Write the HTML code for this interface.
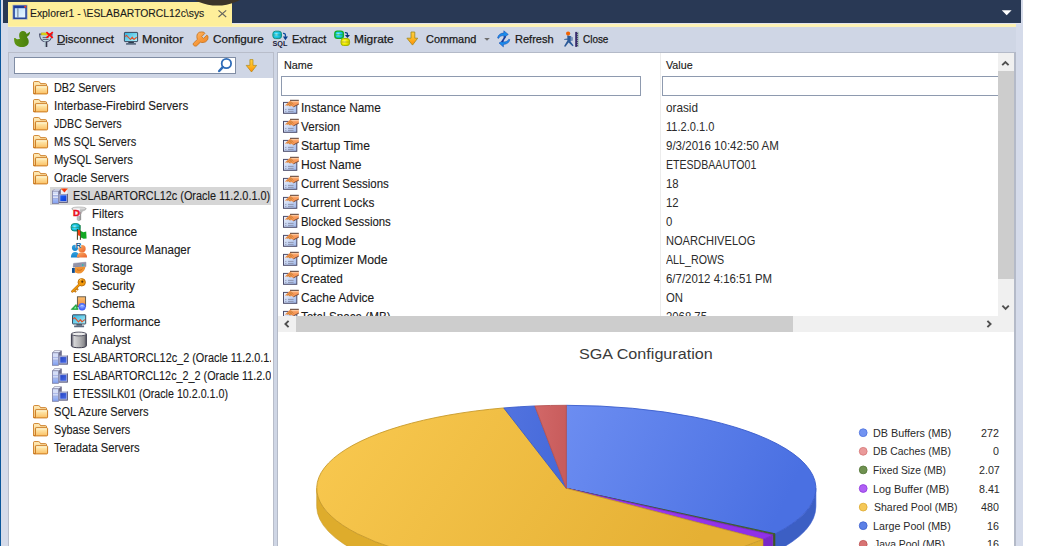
<!DOCTYPE html>
<html><head><meta charset="utf-8"><title>Explorer1</title>
<style>
html,body{margin:0;padding:0;background:#fff;}
body{width:1037px;height:546px;position:relative;overflow:hidden;font-family:"Liberation Sans",sans-serif;}
.a{position:absolute;}
.t{position:absolute;white-space:pre;-webkit-text-stroke:0.12px;transform-origin:0 0;display:inline-block;line-height:16px;height:16px;font-family:"Liberation Sans",sans-serif;}
svg{position:absolute;overflow:visible;}
</style></head><body>
<!-- window chrome -->
<div class="a" style="left:0;top:0;width:1023px;height:546px;background:#d5dbea"></div>
<div class="a" style="left:0;top:0;width:1.3px;height:546px;background:#0a569b"></div>
<div class="a" style="left:3px;top:0;width:1018px;height:23px;background:#293955"></div>
<div class="a" style="left:8px;top:27px;width:1008px;height:519px;background:#cfd6e5"></div>
<div class="a" style="left:8px;top:23px;width:1013px;height:1px;background:#e2e5f1"></div>
<div class="a" style="left:8px;top:24px;width:1008px;height:3px;background:#fdf2b4"></div>
<div class="a" style="left:8px;top:2px;width:224px;height:24.2px;background:#feef9a"></div>
<svg style="left:190px;top:0" width="60" height="8" viewBox="190 0 60 8"><circle cx="217.3" cy="-42.4" r="48" fill="#3b3429"/></svg>
<!-- left panel -->
<div class="a" style="left:8px;top:52px;width:266px;height:494px;background:#b8bdca"></div>
<div class="a" style="left:9px;top:53px;width:263.5px;height:493px;background:#cfd6e5"></div>
<div class="a" style="left:9px;top:77.5px;width:263.5px;height:469px;background:#fff"></div>
<div class="a" style="left:14px;top:57px;width:220px;height:15px;background:#fff;border:1px solid #808da4"></div>
<div class="a" style="left:50px;top:187px;width:221px;height:18px;background:#d6d6d6"></div>
<!-- right panel -->
<div class="a" style="left:277px;top:52px;width:739px;height:494px;background:#b4bac8"></div>
<div class="a" style="left:278.4px;top:53.4px;width:735.4px;height:493px;background:#fff"></div>
<div class="a" style="left:659.5px;top:53px;width:1px;height:264px;background:#ececec"></div>
<div class="a" style="left:281px;top:76px;width:358px;height:18px;background:#fff;border:1px solid #8e9aaf"></div>
<div class="a" style="left:662px;top:76px;width:340px;height:18px;background:#fff;border:1px solid #8e9aaf"></div>
<!-- scrollbars -->
<div class="a" style="left:998px;top:53px;width:15.8px;height:279px;background:#f0f0f0"></div>
<div class="a" style="left:278.3px;top:316.2px;width:735.5px;height:15.5px;background:#f0f0f0"></div>
<div class="a" style="left:998px;top:70.8px;width:15.8px;height:208.4px;background:#cdcdcd"></div>
<div class="a" style="left:296px;top:316.2px;width:496.5px;height:15.5px;background:#cdcdcd"></div>
<svg style="left:0;top:0" width="1037" height="546" viewBox="0 0 1037 546"><defs><linearGradient id="fo1" x1="0" y1="0" x2="0" y2="1"><stop offset="0" stop-color="#fff3c0"/><stop offset="1" stop-color="#fbbf62"/></linearGradient><linearGradient id="fo2" x1="0" y1="0" x2="0" y2="1"><stop offset="0" stop-color="#fff0c0"/><stop offset="1" stop-color="#f6b256"/></linearGradient><linearGradient id="tw" x1="0" y1="0" x2="0" y2="1"><stop offset="0" stop-color="#dfe7fb"/><stop offset="0.5" stop-color="#b4c4f4"/><stop offset="1" stop-color="#7f9ff0"/></linearGradient><linearGradient id="sc" x1="0" y1="0" x2="1" y2="1"><stop offset="0" stop-color="#2443c2"/><stop offset="1" stop-color="#4a6ce6"/></linearGradient><linearGradient id="sc2" x1="0" y1="0" x2="1" y2="1"><stop offset="0" stop-color="#1f63f4"/><stop offset="1" stop-color="#0a3ad8"/></linearGradient><linearGradient id="rt" x1="0" y1="0" x2="1" y2="0"><stop offset="0" stop-color="#ff7a10"/><stop offset="0.5" stop-color="#f42a0c"/><stop offset="1" stop-color="#ff6a10"/></linearGradient><linearGradient id="mo" x1="0" y1="0" x2="1" y2="1"><stop offset="0" stop-color="#2fb0de"/><stop offset="1" stop-color="#b4f4fa"/></linearGradient><linearGradient id="dk" x1="0" y1="0" x2="1" y2="0"><stop offset="0" stop-color="#5f9612"/><stop offset="1" stop-color="#477d0c"/></linearGradient><linearGradient id="wr" x1="0" y1="0" x2="1" y2="1"><stop offset="0" stop-color="#ffc27a"/><stop offset="0.5" stop-color="#f89a3c"/><stop offset="1" stop-color="#ee8422"/></linearGradient><linearGradient id="ar" x1="0" y1="0" x2="0" y2="1"><stop offset="0" stop-color="#ffd040"/><stop offset="0.5" stop-color="#ffb820"/><stop offset="1" stop-color="#ff8a08"/></linearGradient><radialGradient id="cy" cx="0.4" cy="0.45" r="0.6"><stop offset="0" stop-color="#d8ffff"/><stop offset="0.45" stop-color="#22d0f0"/><stop offset="1" stop-color="#12a4c4"/></radialGradient><radialGradient id="ye" cx="0.4" cy="0.45" r="0.6"><stop offset="0" stop-color="#ffffa0"/><stop offset="0.5" stop-color="#f4f000"/><stop offset="1" stop-color="#c8cc00"/></radialGradient><linearGradient id="cl" x1="0" y1="0" x2="1" y2="0"><stop offset="0" stop-color="#4a4a5c"/><stop offset="0.18" stop-color="#d6d6d8"/><stop offset="0.55" stop-color="#b4b4b6"/><stop offset="0.85" stop-color="#8c8c90"/><stop offset="1" stop-color="#4c4c58"/></linearGradient><linearGradient id="bp" x1="0" y1="0" x2="0" y2="1"><stop offset="0" stop-color="#35a2de"/><stop offset="1" stop-color="#1583cc"/></linearGradient><linearGradient id="op" x1="0" y1="0" x2="1" y2="1"><stop offset="0" stop-color="#fbb068"/><stop offset="1" stop-color="#e9602a"/></linearGradient><linearGradient id="sq" x1="0" y1="0" x2="0" y2="1"><stop offset="0" stop-color="#fcc070"/><stop offset="1" stop-color="#ee8a3c"/></linearGradient><radialGradient id="bc" cx="0.5" cy="0.45" r="0.55"><stop offset="0" stop-color="#9ab2ff"/><stop offset="0.55" stop-color="#5878fa"/><stop offset="1" stop-color="#3452f4"/></radialGradient><linearGradient id="pr" x1="0" y1="0" x2="1" y2="1"><stop offset="0" stop-color="#f2f5fc"/><stop offset="1" stop-color="#9db6ea"/></linearGradient><linearGradient id="ti" x1="0" y1="0" x2="1" y2="1"><stop offset="0" stop-color="#bfe0fb"/><stop offset="1" stop-color="#eaf6ff"/></linearGradient></defs><rect x="12.5" y="4.8" width="15" height="14.8" fill="#9aa4be"/><rect x="13.3" y="5.5" width="13.4" height="13.4" fill="#1c3c98"/><rect x="14.8" y="8.2" width="10.5" height="9.3" fill="url(#ti)"/><rect x="17.4" y="8.2" width="1" height="9.3" fill="#66768e"/><rect x="24.3" y="5.9" width="1.9" height="1.8" fill="#ff3a1a"/><path d="M218.5,10.4 L226.2,17 M226.2,10.4 L218.5,17" stroke="#66665e" stroke-width="1.15" fill="none"/><g transform="translate(14,31)"><path d="M8.9,0 C11,0 12.4,1.4 12.6,3 L16,0.8 C16.2,2.6 15.2,4.4 13.6,5.2 L12.9,6.3 C14.2,7.6 14.9,9.4 14.7,11.2 C14.4,14 11.8,16 8,16 C4,16 1.2,14.2 0.5,11.2 C0.1,9.6 0,8 0.2,7.1 C1,6.8 2,7.2 2.4,8 C3.6,8.4 5,8.3 6,7.8 C5.2,6.8 5.1,5 5.2,3.6 C5.4,1.4 6.9,0 8.9,0 Z" fill="url(#dk)"/></g><path d="M39.6,34.2 H52 C52,38.6 49.5,41.8 45.8,42 C42.1,41.8 39.6,38.6 39.6,34.2 Z" fill="#c2d9e1" stroke="#4f5472" stroke-width="1.2"/><rect x="41.2" y="32.9" width="6.2" height="2.1" fill="#e4da10" stroke="#a8a428" stroke-width="0.5"/><path d="M42.6,37.4 H48.6 M42.6,39.4 H48.6" stroke="#4a5068" stroke-width="0.9"/><rect x="44.2" y="41.6" width="1.6" height="5.4" fill="#bcd2da"/><rect x="45.7" y="41.6" width="1.6" height="5.4" fill="#34364c"/><path d="M46.4,32.2 L52.8,37.8 M52.8,32.2 L46.4,37.8" stroke="#ff0a0a" stroke-width="1.7"/><rect x="57" y="43.8" width="8" height="1" fill="#1a1a1a"/><g transform="translate(123.9,31.9)"><rect x="0.5" y="0.5" width="13.2" height="9.2" rx="0.6" fill="url(#mo)" stroke="#3a4a60" stroke-width="1"/><path d="M1.2,4.7 L2.6,3.4 L6.5,7.6 L8.4,5.3 L10,7.6 L12.8,5.3" fill="none" stroke="#e2502a" stroke-width="1.1" stroke-linejoin="round"/><rect x="4.4" y="10" width="5.6" height="1.3" fill="#2b3a4c"/><rect x="2.1" y="11.2" width="10" height="1.7" rx="0.3" fill="#5b6b80"/></g><path d="M193.4,43.2 L197.4,39.4 C196.6,37.4 196.8,35.2 197.5,33.8 L199.2,32.3 C200.6,31.8 202.6,31.8 203.9,32.2 L204.9,33.3 L201.7,36.6 L203.5,38.4 L206.8,35.1 L207.8,35.9 C208.2,37.4 208,39.2 207.3,40.2 L205.6,41.8 C204.2,42.5 202.2,42.8 200.4,42.2 L196.5,45.9 C195.6,46.4 194.3,46 193.6,45.2 C193.1,44.5 193,43.8 193.4,43.2 Z" fill="url(#wr)" stroke="#c47018" stroke-width="0.8" stroke-linejoin="round"/><rect x="272.9" y="31.2" width="8.6" height="7.4" rx="2.6" fill="url(#cy)" stroke="#16947e" stroke-width="1"/><path d="M273.4,34.9 H281" stroke="#16947e" stroke-width="0.7"/><path d="M283,33.3 C285,33.1 285.6,34 285.5,36.8" fill="none" stroke="#0d4ea0" stroke-width="1.3"/><path d="M282.9,36.6 H288 L285.4,40.2 Z" fill="#0a3f8c"/><text x="272.5" y="45.9" font-family="Liberation Sans, sans-serif" font-size="6.3" font-weight="bold" fill="#1c2038" textLength="15" lengthAdjust="spacingAndGlyphs">SQL</text><rect x="334.8" y="31.2" width="8.6" height="7.2" rx="2.6" fill="url(#cy)" stroke="#12b024" stroke-width="1.3"/><path d="M335.2,34.8 H343" stroke="#12b024" stroke-width="0.8"/><rect x="341" y="38.5" width="8.6" height="7" rx="2.6" fill="url(#ye)" stroke="#a4b400" stroke-width="1"/><path d="M341.4,42 H349.2" stroke="#b0a000" stroke-width="0.8"/><path d="M344.9,32.6 C347,32.4 347.6,33 347.5,35.4" fill="none" stroke="#0d3f88" stroke-width="1.3"/><path d="M344.9,35 H350 L347.4,37.9 Z" fill="#0a3270"/><path d="M411,32 H414.8 V38.2 H417.7 L412.5,45.1 L406.9,38.2 H411 Z" fill="url(#ar)" stroke="#a08818" stroke-width="0.8" stroke-linejoin="round"/><path d="M484.2,38 H489.8 L487,40.8 Z" fill="#6e6e6e"/><path d="M497.6,38 C498,35 500.6,33 503.8,33 L503.8,30.8 L508.3,34.4 L503.8,37.6 L503.8,35.6 C501.2,35.6 499.4,36.6 498.6,38.4 Z" fill="#1b8cec" stroke="#1545a8" stroke-width="0.5"/><path d="M509.8,39.6 C509.4,42.6 506.8,44.4 503.4,44.4 L503.4,46.9 L499,43 L503.4,40.6 L503.4,42 C506,42 507.9,41 508.8,39.2 Z" fill="#1b8cec" stroke="#1545a8" stroke-width="0.5"/><path d="M505.6,36.2 L501.8,42" stroke="#1a3a98" stroke-width="1.6"/><circle cx="568.1" cy="33.6" r="2.1" fill="#f26200"/><path d="M567.2,35.6 L570.4,36 L572.4,37.4 L572.4,40.4 L570.8,40.4 L570.6,41.6 L573.6,45.4 L572.6,46.2 L568.6,42.6 L565.4,46.8 L564,46.2 L567.4,40.6 L567.4,39.8 L564.2,39.8 L564.2,38.9 L567.4,38.6 Z" fill="#2c5a98"/><rect x="570.6" y="37" width="2" height="3.6" fill="#7a94bc"/><rect x="575.2" y="31.9" width="2.2" height="15" fill="#3a2c6c"/><rect x="577.3" y="31.9" width="1.4" height="15" fill="#9ab8a8"/><path d="M576.6,33.5 H578 M576.6,35.5 H578 M576.6,37.5 H578 M576.6,39.5 H578 M576.6,41.5 H578 M576.6,43.5 H578 M576.6,45.5 H578" stroke="#3a2c6c" stroke-width="0.8"/><circle cx="226.4" cy="63.5" r="4.7" fill="#fff" stroke="#2f6cb8" stroke-width="1.8"/><path d="M222.8,67.2 L219.2,71" stroke="#2f6cb8" stroke-width="2.5" stroke-linecap="round"/><path d="M249.9,59.6 H253 V65.4 H256.6 L251.5,72 L246.2,65.4 H249.9 Z" fill="url(#ar)" stroke="#b08a18" stroke-width="0.7" stroke-linejoin="round"/><g transform="translate(33,81.1)"><path d="M0.5,12.4 V1.5 Q0.5,0.5 1.5,0.5 H5.6 Q6.3,0.5 6.7,1.1 L7.6,2.6 H12.6 Q13.5,2.6 13.5,3.5 V5 H2.4 V12.4 Z" fill="url(#fo2)" stroke="#cb7a22" stroke-width="1" stroke-linejoin="round"/><path d="M1.3,11.8 V1.8 Q1.3,1.3 1.9,1.3 H5.4" fill="none" stroke="#ffe9b4" stroke-width="0.7"/><rect x="2.4" y="4.7" width="12.2" height="8.1" rx="0.8" fill="url(#fo1)" stroke="#cb7a22" stroke-width="1"/><path d="M3.4,5.7 H13.7" stroke="#fff9e0" stroke-width="0.9" fill="none"/><path d="M0.5,12.4 Q0.5,12.8 1,12.8 H3" stroke="#cb7a22" stroke-width="1" fill="none"/></g><g transform="translate(33,99.1)"><path d="M0.5,12.4 V1.5 Q0.5,0.5 1.5,0.5 H5.6 Q6.3,0.5 6.7,1.1 L7.6,2.6 H12.6 Q13.5,2.6 13.5,3.5 V5 H2.4 V12.4 Z" fill="url(#fo2)" stroke="#cb7a22" stroke-width="1" stroke-linejoin="round"/><path d="M1.3,11.8 V1.8 Q1.3,1.3 1.9,1.3 H5.4" fill="none" stroke="#ffe9b4" stroke-width="0.7"/><rect x="2.4" y="4.7" width="12.2" height="8.1" rx="0.8" fill="url(#fo1)" stroke="#cb7a22" stroke-width="1"/><path d="M3.4,5.7 H13.7" stroke="#fff9e0" stroke-width="0.9" fill="none"/><path d="M0.5,12.4 Q0.5,12.8 1,12.8 H3" stroke="#cb7a22" stroke-width="1" fill="none"/></g><g transform="translate(33,117.1)"><path d="M0.5,12.4 V1.5 Q0.5,0.5 1.5,0.5 H5.6 Q6.3,0.5 6.7,1.1 L7.6,2.6 H12.6 Q13.5,2.6 13.5,3.5 V5 H2.4 V12.4 Z" fill="url(#fo2)" stroke="#cb7a22" stroke-width="1" stroke-linejoin="round"/><path d="M1.3,11.8 V1.8 Q1.3,1.3 1.9,1.3 H5.4" fill="none" stroke="#ffe9b4" stroke-width="0.7"/><rect x="2.4" y="4.7" width="12.2" height="8.1" rx="0.8" fill="url(#fo1)" stroke="#cb7a22" stroke-width="1"/><path d="M3.4,5.7 H13.7" stroke="#fff9e0" stroke-width="0.9" fill="none"/><path d="M0.5,12.4 Q0.5,12.8 1,12.8 H3" stroke="#cb7a22" stroke-width="1" fill="none"/></g><g transform="translate(33,135.1)"><path d="M0.5,12.4 V1.5 Q0.5,0.5 1.5,0.5 H5.6 Q6.3,0.5 6.7,1.1 L7.6,2.6 H12.6 Q13.5,2.6 13.5,3.5 V5 H2.4 V12.4 Z" fill="url(#fo2)" stroke="#cb7a22" stroke-width="1" stroke-linejoin="round"/><path d="M1.3,11.8 V1.8 Q1.3,1.3 1.9,1.3 H5.4" fill="none" stroke="#ffe9b4" stroke-width="0.7"/><rect x="2.4" y="4.7" width="12.2" height="8.1" rx="0.8" fill="url(#fo1)" stroke="#cb7a22" stroke-width="1"/><path d="M3.4,5.7 H13.7" stroke="#fff9e0" stroke-width="0.9" fill="none"/><path d="M0.5,12.4 Q0.5,12.8 1,12.8 H3" stroke="#cb7a22" stroke-width="1" fill="none"/></g><g transform="translate(33,153.1)"><path d="M0.5,12.4 V1.5 Q0.5,0.5 1.5,0.5 H5.6 Q6.3,0.5 6.7,1.1 L7.6,2.6 H12.6 Q13.5,2.6 13.5,3.5 V5 H2.4 V12.4 Z" fill="url(#fo2)" stroke="#cb7a22" stroke-width="1" stroke-linejoin="round"/><path d="M1.3,11.8 V1.8 Q1.3,1.3 1.9,1.3 H5.4" fill="none" stroke="#ffe9b4" stroke-width="0.7"/><rect x="2.4" y="4.7" width="12.2" height="8.1" rx="0.8" fill="url(#fo1)" stroke="#cb7a22" stroke-width="1"/><path d="M3.4,5.7 H13.7" stroke="#fff9e0" stroke-width="0.9" fill="none"/><path d="M0.5,12.4 Q0.5,12.8 1,12.8 H3" stroke="#cb7a22" stroke-width="1" fill="none"/></g><g transform="translate(33,171.1)"><path d="M0.5,12.4 V1.5 Q0.5,0.5 1.5,0.5 H5.6 Q6.3,0.5 6.7,1.1 L7.6,2.6 H12.6 Q13.5,2.6 13.5,3.5 V5 H2.4 V12.4 Z" fill="url(#fo2)" stroke="#cb7a22" stroke-width="1" stroke-linejoin="round"/><path d="M1.3,11.8 V1.8 Q1.3,1.3 1.9,1.3 H5.4" fill="none" stroke="#ffe9b4" stroke-width="0.7"/><rect x="2.4" y="4.7" width="12.2" height="8.1" rx="0.8" fill="url(#fo1)" stroke="#cb7a22" stroke-width="1"/><path d="M3.4,5.7 H13.7" stroke="#fff9e0" stroke-width="0.9" fill="none"/><path d="M0.5,12.4 Q0.5,12.8 1,12.8 H3" stroke="#cb7a22" stroke-width="1" fill="none"/></g><g transform="translate(33,405.1)"><path d="M0.5,12.4 V1.5 Q0.5,0.5 1.5,0.5 H5.6 Q6.3,0.5 6.7,1.1 L7.6,2.6 H12.6 Q13.5,2.6 13.5,3.5 V5 H2.4 V12.4 Z" fill="url(#fo2)" stroke="#cb7a22" stroke-width="1" stroke-linejoin="round"/><path d="M1.3,11.8 V1.8 Q1.3,1.3 1.9,1.3 H5.4" fill="none" stroke="#ffe9b4" stroke-width="0.7"/><rect x="2.4" y="4.7" width="12.2" height="8.1" rx="0.8" fill="url(#fo1)" stroke="#cb7a22" stroke-width="1"/><path d="M3.4,5.7 H13.7" stroke="#fff9e0" stroke-width="0.9" fill="none"/><path d="M0.5,12.4 Q0.5,12.8 1,12.8 H3" stroke="#cb7a22" stroke-width="1" fill="none"/></g><g transform="translate(33,423.1)"><path d="M0.5,12.4 V1.5 Q0.5,0.5 1.5,0.5 H5.6 Q6.3,0.5 6.7,1.1 L7.6,2.6 H12.6 Q13.5,2.6 13.5,3.5 V5 H2.4 V12.4 Z" fill="url(#fo2)" stroke="#cb7a22" stroke-width="1" stroke-linejoin="round"/><path d="M1.3,11.8 V1.8 Q1.3,1.3 1.9,1.3 H5.4" fill="none" stroke="#ffe9b4" stroke-width="0.7"/><rect x="2.4" y="4.7" width="12.2" height="8.1" rx="0.8" fill="url(#fo1)" stroke="#cb7a22" stroke-width="1"/><path d="M3.4,5.7 H13.7" stroke="#fff9e0" stroke-width="0.9" fill="none"/><path d="M0.5,12.4 Q0.5,12.8 1,12.8 H3" stroke="#cb7a22" stroke-width="1" fill="none"/></g><g transform="translate(33,441.1)"><path d="M0.5,12.4 V1.5 Q0.5,0.5 1.5,0.5 H5.6 Q6.3,0.5 6.7,1.1 L7.6,2.6 H12.6 Q13.5,2.6 13.5,3.5 V5 H2.4 V12.4 Z" fill="url(#fo2)" stroke="#cb7a22" stroke-width="1" stroke-linejoin="round"/><path d="M1.3,11.8 V1.8 Q1.3,1.3 1.9,1.3 H5.4" fill="none" stroke="#ffe9b4" stroke-width="0.7"/><rect x="2.4" y="4.7" width="12.2" height="8.1" rx="0.8" fill="url(#fo1)" stroke="#cb7a22" stroke-width="1"/><path d="M3.4,5.7 H13.7" stroke="#fff9e0" stroke-width="0.9" fill="none"/><path d="M0.5,12.4 Q0.5,12.8 1,12.8 H3" stroke="#cb7a22" stroke-width="1" fill="none"/></g><g transform="translate(52,188)"><path d="M0.3,3.2 L2.3,0.9 H9.8 V7 H6.6 V3.2 Z" fill="#6f6f8c"/><path d="M0.8,3.0 L2.6,1.3 H8.6 L6.6,3.0 Z" fill="#e9eefc"/><rect x="0.4" y="3.1" width="6.1" height="12.5" fill="url(#tw)" stroke="#7d7fa3" stroke-width="0.8"/><path d="M1,6.6 H6 M1,9.4 H6" stroke="#f4f7ff" stroke-width="1"/><path d="M1,7.4 H6 M1,10.2 H6" stroke="#8d9bd0" stroke-width="0.6"/><rect x="7" y="5.8" width="8.8" height="9" fill="#9a9cb8"/><path d="M15.8,5.8 V14.8 H7 V14 H15 V5.8 Z" fill="#55577a"/><rect x="7.8" y="6.9" width="7" height="6.6" fill="#a9b7f2"/><rect x="8.3" y="7.4" width="6" height="5.6" fill="url(#sc2)"/><rect x="8.8" y="1.6" width="6.6" height="4.4" fill="#eceff6"/><path d="M8.7,0.5 H16 L12.4,4.6 Z" fill="url(#rt)"/></g><g transform="translate(52,349.7)"><path d="M0.3,3.2 L2.3,0.9 H9.8 V7 H6.6 V3.2 Z" fill="#6f6f8c"/><path d="M0.8,3.0 L2.6,1.3 H8.6 L6.6,3.0 Z" fill="#e9eefc"/><rect x="0.4" y="3.1" width="6.1" height="12.5" fill="url(#tw)" stroke="#7d7fa3" stroke-width="0.8"/><path d="M1,6.6 H6 M1,9.4 H6" stroke="#f4f7ff" stroke-width="1"/><path d="M1,7.4 H6 M1,10.2 H6" stroke="#8d9bd0" stroke-width="0.6"/><rect x="7" y="5.8" width="8.8" height="9" fill="#9a9cb8"/><path d="M15.8,5.8 V14.8 H7 V14 H15 V5.8 Z" fill="#55577a"/><rect x="7.8" y="6.9" width="7" height="6.6" fill="#a9b7f2"/><rect x="8.3" y="7.4" width="6" height="5.6" fill="url(#sc)"/></g><g transform="translate(52,367.7)"><path d="M0.3,3.2 L2.3,0.9 H9.8 V7 H6.6 V3.2 Z" fill="#6f6f8c"/><path d="M0.8,3.0 L2.6,1.3 H8.6 L6.6,3.0 Z" fill="#e9eefc"/><rect x="0.4" y="3.1" width="6.1" height="12.5" fill="url(#tw)" stroke="#7d7fa3" stroke-width="0.8"/><path d="M1,6.6 H6 M1,9.4 H6" stroke="#f4f7ff" stroke-width="1"/><path d="M1,7.4 H6 M1,10.2 H6" stroke="#8d9bd0" stroke-width="0.6"/><rect x="7" y="5.8" width="8.8" height="9" fill="#9a9cb8"/><path d="M15.8,5.8 V14.8 H7 V14 H15 V5.8 Z" fill="#55577a"/><rect x="7.8" y="6.9" width="7" height="6.6" fill="#a9b7f2"/><rect x="8.3" y="7.4" width="6" height="5.6" fill="url(#sc)"/></g><g transform="translate(52,385.7)"><path d="M0.3,3.2 L2.3,0.9 H9.8 V7 H6.6 V3.2 Z" fill="#6f6f8c"/><path d="M0.8,3.0 L2.6,1.3 H8.6 L6.6,3.0 Z" fill="#e9eefc"/><rect x="0.4" y="3.1" width="6.1" height="12.5" fill="url(#tw)" stroke="#7d7fa3" stroke-width="0.8"/><path d="M1,6.6 H6 M1,9.4 H6" stroke="#f4f7ff" stroke-width="1"/><path d="M1,7.4 H6 M1,10.2 H6" stroke="#8d9bd0" stroke-width="0.6"/><rect x="7" y="5.8" width="8.8" height="9" fill="#9a9cb8"/><path d="M15.8,5.8 V14.8 H7 V14 H15 V5.8 Z" fill="#55577a"/><rect x="7.8" y="6.9" width="7" height="6.6" fill="#a9b7f2"/><rect x="8.3" y="7.4" width="6" height="5.6" fill="url(#sc)"/></g><path d="M71.8,208.6 C71.8,206.4 86.2,206.4 86.2,208.6 C86.2,209.6 84.6,210.6 82.4,211 L80.8,214.4 V219.6 C80.8,221 77.2,221 77.2,219.6 V214.4 L75.2,211 C73.2,210.6 71.8,209.6 71.8,208.6 Z" fill="#bdbdbd" stroke="#9a9a9a" stroke-width="0.5"/><ellipse cx="79" cy="208.4" rx="6.2" ry="1.2" fill="#d9d9d9"/><path d="M80.2,212 V220" stroke="#8e8e8e" stroke-width="1.2"/><rect x="73.2" y="208.4" width="6.6" height="7.6" fill="#fff" opacity="0.85"/><text x="73.1" y="215.8" font-family="Liberation Sans, sans-serif" font-size="9.6" font-weight="bold" fill="#e8101e" stroke="#e8101e" stroke-width="0.5">D</text><rect x="79" y="225" width="1.6" height="5.6" fill="#0a7a30"/><rect x="71.2" y="223.7" width="8.6" height="7.2" rx="2.8" fill="url(#cy)" stroke="#0c8c74" stroke-width="1"/><path d="M71.6,227.3 H79.4" stroke="#0c8c74" stroke-width="0.7"/><path d="M77.4,229 V239.8 M80.4,230.4 V239.8" stroke="#3a3a12" stroke-width="1"/><path d="M77.9,229.8 L80,230.2 L80,235.9 L77.9,235.2 Z" fill="#f4400e"/><path d="M80.9,231 L83.4,232.2 L86.2,231.6 L86.6,238.4 L83.6,238.8 L80.9,237.4 Z" fill="#12a824"/><circle cx="75" cy="247.8" r="3.1" fill="url(#bp)"/><path d="M70.9,257.6 C70.9,254 72.6,252 75.2,252 C77.8,252 79.4,254 79.4,257.6 Z" fill="url(#bp)"/><circle cx="82" cy="248.8" r="3.7" fill="url(#op)"/><path d="M76.8,257.6 C76.8,254 78.8,252.2 82,252.2 C85.2,252.2 87.1,254 87.1,257.6 Z" fill="url(#op)"/><rect x="75.6" y="241.6" width="5.6" height="6.2" fill="#fff" opacity="0.9"/><text x="75.8" y="247.5" font-family="Liberation Sans, sans-serif" font-size="7.6" font-weight="bold" fill="#1a5a8c">R</text><path d="M73.6,263.4 L85.9,262.2 V266.6 L73.2,267.2 Z" fill="#9394a8" stroke="#7c7d92" stroke-width="0.5"/><rect x="82" y="264" width="1.4" height="2.2" fill="#3ab4b0"/><path d="M75,267.2 L85.4,266.8 C85.2,269.6 83.4,272 81,273.2 L78,273.6 L75,272.6 Z" fill="#f09232"/><path d="M77,269.6 C78.6,270.8 81,270.6 82.4,268.8" fill="none" stroke="#c86a18" stroke-width="0.8"/><rect x="72" y="268" width="2.8" height="4.9" fill="#0c4a8c"/><path d="M79.4,284.6 L72.4,291.4" stroke="#b86c0a" stroke-width="2.6" stroke-linecap="round"/><path d="M74.6,290.6 L76,292 M76.6,288.6 L78,290" stroke="#b86c0a" stroke-width="2" /><circle cx="81.7" cy="282.3" r="3.7" fill="#f29a0c" stroke="#b86c0a" stroke-width="0.9"/><path d="M79.4,284.6 L72.6,291.2" stroke="#f29a0c" stroke-width="1.4" stroke-linecap="round"/><path d="M74.8,290.6 L75.9,291.7 M76.8,288.7 L77.8,289.7" stroke="#f29a0c" stroke-width="1"/><circle cx="82.3" cy="281.7" r="1.1" fill="#5a3206"/><path d="M79.6,280.6 C80,279.8 80.6,279.4 81.4,279.4" stroke="#ffe0a0" stroke-width="0.9" fill="none"/><rect x="77.4" y="296.8" width="8.2" height="9.6" fill="url(#sq)" stroke="#5a5044" stroke-width="0.9"/><path d="M71.2,309.4 L76,304.5 L78.2,309.4 Z" fill="#14a436" stroke="#0c8a28" stroke-width="0.6" stroke-linejoin="round"/><path d="M73.6,308.4 L75.8,306.2 L76.6,308.4 Z" fill="#8cf0a8"/><circle cx="82.1" cy="306.7" r="3.7" fill="url(#bc)"/><path d="M80,306.6 C80.6,305 83.6,305 84.2,306.6" fill="none" stroke="#c8d8ff" stroke-width="0.8"/><g transform="translate(72,314.3)"><rect x="0.5" y="0.5" width="13.2" height="9.2" rx="0.6" fill="url(#mo)" stroke="#3a4a60" stroke-width="1"/><path d="M1.2,4.7 L2.6,3.4 L6.5,7.6 L8.4,5.3 L10,7.6 L12.8,5.3" fill="none" stroke="#e2502a" stroke-width="1.1" stroke-linejoin="round"/><rect x="4.4" y="10" width="5.6" height="1.3" fill="#2b3a4c"/><rect x="2.1" y="11.2" width="10" height="1.7" rx="0.3" fill="#5b6b80"/></g><path d="M71.4,334 V345.8 C71.4,348.4 86.4,348.4 86.4,345.8 V334 Z" fill="url(#cl)" stroke="#3e3e4e" stroke-width="1"/><ellipse cx="78.9" cy="334" rx="7.5" ry="1.9" fill="#ececec" stroke="#4a4a5a" stroke-width="0.9"/><path d="M1002.2,65.2 L1005.4,62 L1008.6,65.2" fill="none" stroke="#505050" stroke-width="1.9"/><path d="M1002.4,305.6 L1005.6,308.8 L1008.8,305.6" fill="none" stroke="#505050" stroke-width="1.9"/><path d="M288.6,320.8 L285.4,324 L288.6,327.2" fill="none" stroke="#505050" stroke-width="1.9"/><path d="M987.4,320.8 L990.6,324 L987.4,327.2" fill="none" stroke="#505050" stroke-width="1.9"/><path d="M1001.8,10.2 H1011.6 L1006.7,15.2 Z" fill="#fff"/></svg>
<svg style="left:0;top:0" width="1014" height="546" viewBox="0 0 1014 546"><defs><linearGradient id="w_buf" x1="0" y1="0" x2="1" y2="0"><stop offset="0" stop-color="#3c5fc4"/><stop offset="1" stop-color="#3c5fc4"/></linearGradient><linearGradient id="w_fixed" x1="0" y1="0" x2="1" y2="0"><stop offset="0" stop-color="#3d5826"/><stop offset="1" stop-color="#3d5826"/></linearGradient><linearGradient id="w_log" x1="0" y1="0" x2="1" y2="0"><stop offset="0" stop-color="#7a28c8"/><stop offset="1" stop-color="#7a28c8"/></linearGradient><linearGradient id="w_shared" x1="0" y1="0" x2="1" y2="0"><stop offset="0" stop-color="#deac2c"/><stop offset="1" stop-color="#deac2c"/></linearGradient><linearGradient id="g_buf" x1="0" y1="0" x2="1" y2="0.25"><stop offset="0" stop-color="#6c8df1"/><stop offset="1" stop-color="#4a70e2"/></linearGradient><linearGradient id="g_fixed" x1="0" y1="0" x2="1" y2="0.25"><stop offset="0" stop-color="#5a7a3a"/><stop offset="1" stop-color="#4a6a2e"/></linearGradient><linearGradient id="g_log" x1="0" y1="0" x2="1" y2="0.25"><stop offset="0" stop-color="#a040f0"/><stop offset="1" stop-color="#9030e8"/></linearGradient><linearGradient id="g_shared" x1="0" y1="0" x2="1" y2="0.25"><stop offset="0" stop-color="#f9c950"/><stop offset="1" stop-color="#e5b034"/></linearGradient><linearGradient id="g_large" x1="0" y1="0" x2="1" y2="0.25"><stop offset="0" stop-color="#5273df"/><stop offset="1" stop-color="#466ada"/></linearGradient><linearGradient id="g_java" x1="0" y1="0" x2="1" y2="0.25"><stop offset="0" stop-color="#d26868"/><stop offset="1" stop-color="#c85c5c"/></linearGradient></defs><path d="M815.90,488.30 A249.6,83.0 0 0 1 775.04,533.81 L775.04,551.81 A249.6,83.0 0 0 0 815.90,506.30 Z" fill="url(#w_buf)" stroke="#3a5ccc" stroke-width="0.6"/><path d="M775.04,533.81 A249.6,83.0 0 0 1 772.77,534.94 L772.77,552.94 A249.6,83.0 0 0 0 775.04,551.81 Z" fill="url(#w_fixed)" stroke="#3d5826" stroke-width="0.6"/><path d="M772.77,534.94 A249.6,83.0 0 0 1 762.99,539.40 L762.99,557.40 A249.6,83.0 0 0 0 772.77,552.94 Z" fill="url(#w_log)" stroke="#7a28c8" stroke-width="0.6"/><path d="M762.99,539.40 A249.6,83.0 0 0 1 316.70,488.30 L316.70,506.30 A249.6,83.0 0 0 0 762.99,557.40 Z" fill="url(#w_shared)" stroke="#c79a2a" stroke-width="0.6"/><path d="M566.3,488.3 L566.30,405.30 A249.6,83.0 0 0 1 775.04,533.81 Z" fill="url(#g_buf)" stroke="#3a5ccc" stroke-width="0.9" stroke-linejoin="round"/><path d="M566.3,488.3 L775.04,533.81 A249.6,83.0 0 0 1 772.77,534.94 Z" fill="url(#g_fixed)" stroke="#3d5826" stroke-width="0.9" stroke-linejoin="round"/><path d="M566.3,488.3 L772.77,534.94 A249.6,83.0 0 0 1 762.99,539.40 Z" fill="url(#g_log)" stroke="#7a28c8" stroke-width="0.9" stroke-linejoin="round"/><path d="M566.3,488.3 L762.99,539.40 A249.6,83.0 0 1 1 503.80,407.94 Z" fill="url(#g_shared)" stroke="#c79a2a" stroke-width="0.9" stroke-linejoin="round"/><path d="M566.3,488.3 L503.80,407.94 A249.6,83.0 0 0 1 534.80,405.96 Z" fill="url(#g_large)" stroke="#3a5ccc" stroke-width="0.9" stroke-linejoin="round"/><path d="M566.3,488.3 L534.80,405.96 A249.6,83.0 0 0 1 566.30,405.30 Z" fill="url(#g_java)" stroke="#b55353" stroke-width="0.9" stroke-linejoin="round"/></svg><svg style="left:0;top:0" width="1037" height="546" viewBox="0 0 1037 546"><circle cx="863.2" cy="432.7" r="3.9" fill="#7394f2" stroke="#5578e0" stroke-width="0.9"/><circle cx="863.2" cy="451.3" r="3.9" fill="#ea9a9a" stroke="#d87c7c" stroke-width="0.9"/><circle cx="863.2" cy="469.9" r="3.9" fill="#6f9150" stroke="#587a3c" stroke-width="0.9"/><circle cx="863.2" cy="488.5" r="3.9" fill="#b060f5" stroke="#9440e0" stroke-width="0.9"/><circle cx="863.2" cy="507.1" r="3.9" fill="#f5c858" stroke="#e0ae38" stroke-width="0.9"/><circle cx="863.2" cy="525.7" r="3.9" fill="#5c80e6" stroke="#4466d0" stroke-width="0.9"/><circle cx="863.2" cy="544.3" r="3.9" fill="#d87474" stroke="#c05858" stroke-width="0.9"/></svg>
<div class="a" style="left:0;top:0;width:270.5px;height:546px;overflow:hidden">
<span class="t" style="left:72.70px;top:349.54px;font-size:12.0px;transform:scaleX(0.9057);color:#1a1a1a;">ESLABARTORCL12c_2 (Oracle 11.2.0.1.0)</span>
<span class="t" style="left:72.70px;top:367.54px;font-size:12.0px;transform:scaleX(0.9008);color:#1a1a1a;">ESLABARTORCL12c_2_2 (Oracle 11.2.0.1.0)</span>
</div>
<div class="a" style="left:0;top:0;width:998px;height:316.2px;overflow:hidden">
<svg style="left:0;top:0" width="1037" height="546" viewBox="0 0 1037 546"><g transform="translate(283,99.5)"><rect x="0.5" y="2.9" width="13.3" height="10.9" fill="url(#pr)" stroke="#4c4c6a" stroke-width="1"/><path d="M2.2,9.9 H3.4 M5,9.9 H10.6 M2.2,11.9 H3.4 M5,11.9 H10.6" stroke="#8a8ea8" stroke-width="0.9"/><path d="M7.2,0.9 H15.8 V5 L10.2,7.4 L8.4,6.6 L6.6,6.8 L4.6,5.6 L2.4,6.6 L2.2,5.8 L7,1.2 Z" fill="#f8995a"/><path d="M7,0.8 H15.8" stroke="#4a3028" stroke-width="0.9"/><path d="M8,2.2 H15.8" stroke="#ffd0a8" stroke-width="1"/><path d="M15.8,4.6 L10.4,7.4" stroke="#5a3a30" stroke-width="0.8"/><path d="M6.2,2.6 L9.6,6.4 M4.6,4 L7.6,6.6 M3.4,5.2 L5.2,5.9 M7.8,2 L10.6,5.4 M4,5.8 L8.4,2.6 M6,6.6 L9.4,3.6" stroke="#c47a2c" stroke-width="0.6" fill="none"/></g><g transform="translate(283,118.5)"><rect x="0.5" y="2.9" width="13.3" height="10.9" fill="url(#pr)" stroke="#4c4c6a" stroke-width="1"/><path d="M2.2,9.9 H3.4 M5,9.9 H10.6 M2.2,11.9 H3.4 M5,11.9 H10.6" stroke="#8a8ea8" stroke-width="0.9"/><path d="M7.2,0.9 H15.8 V5 L10.2,7.4 L8.4,6.6 L6.6,6.8 L4.6,5.6 L2.4,6.6 L2.2,5.8 L7,1.2 Z" fill="#f8995a"/><path d="M7,0.8 H15.8" stroke="#4a3028" stroke-width="0.9"/><path d="M8,2.2 H15.8" stroke="#ffd0a8" stroke-width="1"/><path d="M15.8,4.6 L10.4,7.4" stroke="#5a3a30" stroke-width="0.8"/><path d="M6.2,2.6 L9.6,6.4 M4.6,4 L7.6,6.6 M3.4,5.2 L5.2,5.9 M7.8,2 L10.6,5.4 M4,5.8 L8.4,2.6 M6,6.6 L9.4,3.6" stroke="#c47a2c" stroke-width="0.6" fill="none"/></g><g transform="translate(283,137.5)"><rect x="0.5" y="2.9" width="13.3" height="10.9" fill="url(#pr)" stroke="#4c4c6a" stroke-width="1"/><path d="M2.2,9.9 H3.4 M5,9.9 H10.6 M2.2,11.9 H3.4 M5,11.9 H10.6" stroke="#8a8ea8" stroke-width="0.9"/><path d="M7.2,0.9 H15.8 V5 L10.2,7.4 L8.4,6.6 L6.6,6.8 L4.6,5.6 L2.4,6.6 L2.2,5.8 L7,1.2 Z" fill="#f8995a"/><path d="M7,0.8 H15.8" stroke="#4a3028" stroke-width="0.9"/><path d="M8,2.2 H15.8" stroke="#ffd0a8" stroke-width="1"/><path d="M15.8,4.6 L10.4,7.4" stroke="#5a3a30" stroke-width="0.8"/><path d="M6.2,2.6 L9.6,6.4 M4.6,4 L7.6,6.6 M3.4,5.2 L5.2,5.9 M7.8,2 L10.6,5.4 M4,5.8 L8.4,2.6 M6,6.6 L9.4,3.6" stroke="#c47a2c" stroke-width="0.6" fill="none"/></g><g transform="translate(283,156.5)"><rect x="0.5" y="2.9" width="13.3" height="10.9" fill="url(#pr)" stroke="#4c4c6a" stroke-width="1"/><path d="M2.2,9.9 H3.4 M5,9.9 H10.6 M2.2,11.9 H3.4 M5,11.9 H10.6" stroke="#8a8ea8" stroke-width="0.9"/><path d="M7.2,0.9 H15.8 V5 L10.2,7.4 L8.4,6.6 L6.6,6.8 L4.6,5.6 L2.4,6.6 L2.2,5.8 L7,1.2 Z" fill="#f8995a"/><path d="M7,0.8 H15.8" stroke="#4a3028" stroke-width="0.9"/><path d="M8,2.2 H15.8" stroke="#ffd0a8" stroke-width="1"/><path d="M15.8,4.6 L10.4,7.4" stroke="#5a3a30" stroke-width="0.8"/><path d="M6.2,2.6 L9.6,6.4 M4.6,4 L7.6,6.6 M3.4,5.2 L5.2,5.9 M7.8,2 L10.6,5.4 M4,5.8 L8.4,2.6 M6,6.6 L9.4,3.6" stroke="#c47a2c" stroke-width="0.6" fill="none"/></g><g transform="translate(283,175.5)"><rect x="0.5" y="2.9" width="13.3" height="10.9" fill="url(#pr)" stroke="#4c4c6a" stroke-width="1"/><path d="M2.2,9.9 H3.4 M5,9.9 H10.6 M2.2,11.9 H3.4 M5,11.9 H10.6" stroke="#8a8ea8" stroke-width="0.9"/><path d="M7.2,0.9 H15.8 V5 L10.2,7.4 L8.4,6.6 L6.6,6.8 L4.6,5.6 L2.4,6.6 L2.2,5.8 L7,1.2 Z" fill="#f8995a"/><path d="M7,0.8 H15.8" stroke="#4a3028" stroke-width="0.9"/><path d="M8,2.2 H15.8" stroke="#ffd0a8" stroke-width="1"/><path d="M15.8,4.6 L10.4,7.4" stroke="#5a3a30" stroke-width="0.8"/><path d="M6.2,2.6 L9.6,6.4 M4.6,4 L7.6,6.6 M3.4,5.2 L5.2,5.9 M7.8,2 L10.6,5.4 M4,5.8 L8.4,2.6 M6,6.6 L9.4,3.6" stroke="#c47a2c" stroke-width="0.6" fill="none"/></g><g transform="translate(283,194.5)"><rect x="0.5" y="2.9" width="13.3" height="10.9" fill="url(#pr)" stroke="#4c4c6a" stroke-width="1"/><path d="M2.2,9.9 H3.4 M5,9.9 H10.6 M2.2,11.9 H3.4 M5,11.9 H10.6" stroke="#8a8ea8" stroke-width="0.9"/><path d="M7.2,0.9 H15.8 V5 L10.2,7.4 L8.4,6.6 L6.6,6.8 L4.6,5.6 L2.4,6.6 L2.2,5.8 L7,1.2 Z" fill="#f8995a"/><path d="M7,0.8 H15.8" stroke="#4a3028" stroke-width="0.9"/><path d="M8,2.2 H15.8" stroke="#ffd0a8" stroke-width="1"/><path d="M15.8,4.6 L10.4,7.4" stroke="#5a3a30" stroke-width="0.8"/><path d="M6.2,2.6 L9.6,6.4 M4.6,4 L7.6,6.6 M3.4,5.2 L5.2,5.9 M7.8,2 L10.6,5.4 M4,5.8 L8.4,2.6 M6,6.6 L9.4,3.6" stroke="#c47a2c" stroke-width="0.6" fill="none"/></g><g transform="translate(283,213.5)"><rect x="0.5" y="2.9" width="13.3" height="10.9" fill="url(#pr)" stroke="#4c4c6a" stroke-width="1"/><path d="M2.2,9.9 H3.4 M5,9.9 H10.6 M2.2,11.9 H3.4 M5,11.9 H10.6" stroke="#8a8ea8" stroke-width="0.9"/><path d="M7.2,0.9 H15.8 V5 L10.2,7.4 L8.4,6.6 L6.6,6.8 L4.6,5.6 L2.4,6.6 L2.2,5.8 L7,1.2 Z" fill="#f8995a"/><path d="M7,0.8 H15.8" stroke="#4a3028" stroke-width="0.9"/><path d="M8,2.2 H15.8" stroke="#ffd0a8" stroke-width="1"/><path d="M15.8,4.6 L10.4,7.4" stroke="#5a3a30" stroke-width="0.8"/><path d="M6.2,2.6 L9.6,6.4 M4.6,4 L7.6,6.6 M3.4,5.2 L5.2,5.9 M7.8,2 L10.6,5.4 M4,5.8 L8.4,2.6 M6,6.6 L9.4,3.6" stroke="#c47a2c" stroke-width="0.6" fill="none"/></g><g transform="translate(283,232.5)"><rect x="0.5" y="2.9" width="13.3" height="10.9" fill="url(#pr)" stroke="#4c4c6a" stroke-width="1"/><path d="M2.2,9.9 H3.4 M5,9.9 H10.6 M2.2,11.9 H3.4 M5,11.9 H10.6" stroke="#8a8ea8" stroke-width="0.9"/><path d="M7.2,0.9 H15.8 V5 L10.2,7.4 L8.4,6.6 L6.6,6.8 L4.6,5.6 L2.4,6.6 L2.2,5.8 L7,1.2 Z" fill="#f8995a"/><path d="M7,0.8 H15.8" stroke="#4a3028" stroke-width="0.9"/><path d="M8,2.2 H15.8" stroke="#ffd0a8" stroke-width="1"/><path d="M15.8,4.6 L10.4,7.4" stroke="#5a3a30" stroke-width="0.8"/><path d="M6.2,2.6 L9.6,6.4 M4.6,4 L7.6,6.6 M3.4,5.2 L5.2,5.9 M7.8,2 L10.6,5.4 M4,5.8 L8.4,2.6 M6,6.6 L9.4,3.6" stroke="#c47a2c" stroke-width="0.6" fill="none"/></g><g transform="translate(283,251.5)"><rect x="0.5" y="2.9" width="13.3" height="10.9" fill="url(#pr)" stroke="#4c4c6a" stroke-width="1"/><path d="M2.2,9.9 H3.4 M5,9.9 H10.6 M2.2,11.9 H3.4 M5,11.9 H10.6" stroke="#8a8ea8" stroke-width="0.9"/><path d="M7.2,0.9 H15.8 V5 L10.2,7.4 L8.4,6.6 L6.6,6.8 L4.6,5.6 L2.4,6.6 L2.2,5.8 L7,1.2 Z" fill="#f8995a"/><path d="M7,0.8 H15.8" stroke="#4a3028" stroke-width="0.9"/><path d="M8,2.2 H15.8" stroke="#ffd0a8" stroke-width="1"/><path d="M15.8,4.6 L10.4,7.4" stroke="#5a3a30" stroke-width="0.8"/><path d="M6.2,2.6 L9.6,6.4 M4.6,4 L7.6,6.6 M3.4,5.2 L5.2,5.9 M7.8,2 L10.6,5.4 M4,5.8 L8.4,2.6 M6,6.6 L9.4,3.6" stroke="#c47a2c" stroke-width="0.6" fill="none"/></g><g transform="translate(283,270.5)"><rect x="0.5" y="2.9" width="13.3" height="10.9" fill="url(#pr)" stroke="#4c4c6a" stroke-width="1"/><path d="M2.2,9.9 H3.4 M5,9.9 H10.6 M2.2,11.9 H3.4 M5,11.9 H10.6" stroke="#8a8ea8" stroke-width="0.9"/><path d="M7.2,0.9 H15.8 V5 L10.2,7.4 L8.4,6.6 L6.6,6.8 L4.6,5.6 L2.4,6.6 L2.2,5.8 L7,1.2 Z" fill="#f8995a"/><path d="M7,0.8 H15.8" stroke="#4a3028" stroke-width="0.9"/><path d="M8,2.2 H15.8" stroke="#ffd0a8" stroke-width="1"/><path d="M15.8,4.6 L10.4,7.4" stroke="#5a3a30" stroke-width="0.8"/><path d="M6.2,2.6 L9.6,6.4 M4.6,4 L7.6,6.6 M3.4,5.2 L5.2,5.9 M7.8,2 L10.6,5.4 M4,5.8 L8.4,2.6 M6,6.6 L9.4,3.6" stroke="#c47a2c" stroke-width="0.6" fill="none"/></g><g transform="translate(283,289.5)"><rect x="0.5" y="2.9" width="13.3" height="10.9" fill="url(#pr)" stroke="#4c4c6a" stroke-width="1"/><path d="M2.2,9.9 H3.4 M5,9.9 H10.6 M2.2,11.9 H3.4 M5,11.9 H10.6" stroke="#8a8ea8" stroke-width="0.9"/><path d="M7.2,0.9 H15.8 V5 L10.2,7.4 L8.4,6.6 L6.6,6.8 L4.6,5.6 L2.4,6.6 L2.2,5.8 L7,1.2 Z" fill="#f8995a"/><path d="M7,0.8 H15.8" stroke="#4a3028" stroke-width="0.9"/><path d="M8,2.2 H15.8" stroke="#ffd0a8" stroke-width="1"/><path d="M15.8,4.6 L10.4,7.4" stroke="#5a3a30" stroke-width="0.8"/><path d="M6.2,2.6 L9.6,6.4 M4.6,4 L7.6,6.6 M3.4,5.2 L5.2,5.9 M7.8,2 L10.6,5.4 M4,5.8 L8.4,2.6 M6,6.6 L9.4,3.6" stroke="#c47a2c" stroke-width="0.6" fill="none"/></g><g transform="translate(283,308.5)"><rect x="0.5" y="2.9" width="13.3" height="10.9" fill="url(#pr)" stroke="#4c4c6a" stroke-width="1"/><path d="M2.2,9.9 H3.4 M5,9.9 H10.6 M2.2,11.9 H3.4 M5,11.9 H10.6" stroke="#8a8ea8" stroke-width="0.9"/><path d="M7.2,0.9 H15.8 V5 L10.2,7.4 L8.4,6.6 L6.6,6.8 L4.6,5.6 L2.4,6.6 L2.2,5.8 L7,1.2 Z" fill="#f8995a"/><path d="M7,0.8 H15.8" stroke="#4a3028" stroke-width="0.9"/><path d="M8,2.2 H15.8" stroke="#ffd0a8" stroke-width="1"/><path d="M15.8,4.6 L10.4,7.4" stroke="#5a3a30" stroke-width="0.8"/><path d="M6.2,2.6 L9.6,6.4 M4.6,4 L7.6,6.6 M3.4,5.2 L5.2,5.9 M7.8,2 L10.6,5.4 M4,5.8 L8.4,2.6 M6,6.6 L9.4,3.6" stroke="#c47a2c" stroke-width="0.6" fill="none"/></g></svg>
<span class="t" style="left:300.60px;top:99.67px;font-size:12.2px;transform:scaleX(0.9732);color:#1a1a1a;">Instance Name</span>
<span class="t" style="left:300.60px;top:118.67px;font-size:12.2px;transform:scaleX(0.9600);color:#1a1a1a;">Version</span>
<span class="t" style="left:300.60px;top:137.67px;font-size:12.2px;transform:scaleX(0.9986);color:#1a1a1a;">Startup Time</span>
<span class="t" style="left:300.60px;top:156.67px;font-size:12.2px;transform:scaleX(0.9934);color:#1a1a1a;">Host Name</span>
<span class="t" style="left:300.60px;top:175.67px;font-size:12.2px;transform:scaleX(0.9387);color:#1a1a1a;">Current Sessions</span>
<span class="t" style="left:300.60px;top:194.67px;font-size:12.2px;transform:scaleX(0.9658);color:#1a1a1a;">Current Locks</span>
<span class="t" style="left:300.60px;top:213.67px;font-size:12.2px;transform:scaleX(0.9333);color:#1a1a1a;">Blocked Sessions</span>
<span class="t" style="left:300.60px;top:232.67px;font-size:12.2px;transform:scaleX(1.0111);color:#1a1a1a;">Log Mode</span>
<span class="t" style="left:300.60px;top:251.67px;font-size:12.2px;transform:scaleX(1.0070);color:#1a1a1a;">Optimizer Mode</span>
<span class="t" style="left:300.60px;top:270.67px;font-size:12.2px;transform:scaleX(0.9651);color:#1a1a1a;">Created</span>
<span class="t" style="left:300.60px;top:289.67px;font-size:12.2px;transform:scaleX(0.9824);color:#1a1a1a;">Cache Advice</span>
<span class="t" style="left:300.60px;top:308.67px;font-size:12.2px;transform:scaleX(0.9591);color:#1a1a1a;">Total Space (MB)</span>
<span class="t" style="left:666.40px;top:99.67px;font-size:12.2px;transform:scaleX(0.9636);color:#2b2b2b;-webkit-text-stroke:0;">orasid</span>
<span class="t" style="left:666.40px;top:118.67px;font-size:12.2px;transform:scaleX(0.9075);color:#2b2b2b;-webkit-text-stroke:0;">11.2.0.1.0</span>
<span class="t" style="left:666.40px;top:137.67px;font-size:12.2px;transform:scaleX(0.9462);color:#2b2b2b;-webkit-text-stroke:0;">9/3/2016 10:42:50 AM</span>
<span class="t" style="left:666.40px;top:156.67px;font-size:12.2px;transform:scaleX(0.8673);color:#2b2b2b;-webkit-text-stroke:0;">ETESDBAAUTO01</span>
<span class="t" style="left:666.40px;top:175.67px;font-size:12.2px;transform:scaleX(0.9300);color:#2b2b2b;-webkit-text-stroke:0;">18</span>
<span class="t" style="left:666.40px;top:194.67px;font-size:12.2px;transform:scaleX(0.9300);color:#2b2b2b;-webkit-text-stroke:0;">12</span>
<span class="t" style="left:666.40px;top:213.67px;font-size:12.2px;transform:scaleX(0.9300);color:#2b2b2b;-webkit-text-stroke:0;">0</span>
<span class="t" style="left:666.40px;top:232.67px;font-size:12.2px;transform:scaleX(0.9092);color:#2b2b2b;-webkit-text-stroke:0;">NOARCHIVELOG</span>
<span class="t" style="left:666.40px;top:251.67px;font-size:12.2px;transform:scaleX(0.8758);color:#2b2b2b;-webkit-text-stroke:0;">ALL_ROWS</span>
<span class="t" style="left:666.40px;top:270.67px;font-size:12.2px;transform:scaleX(0.9372);color:#2b2b2b;-webkit-text-stroke:0;">6/7/2012 4:16:51 PM</span>
<span class="t" style="left:666.40px;top:289.67px;font-size:12.2px;transform:scaleX(0.9300);color:#2b2b2b;-webkit-text-stroke:0;">ON</span>
<span class="t" style="left:666.40px;top:308.67px;font-size:12.2px;transform:scaleX(0.9300);color:#2b2b2b;-webkit-text-stroke:0;">2068.75</span>
</div>
<span class="t" style="left:30.38px;top:5.08px;font-size:11.3px;transform:scaleX(0.9180);color:#1a1a1a;">Explorer1 - \ESLABARTORCL12c\sys</span>
<span class="t" style="left:56.98px;top:31.08px;font-size:11.3px;transform:scaleX(1.0182);color:#1a1a1a;-webkit-text-stroke:0.25px;">Disconnect</span>
<span class="t" style="left:142.10px;top:31.08px;font-size:11.3px;transform:scaleX(1.0973);color:#1a1a1a;-webkit-text-stroke:0.25px;">Monitor</span>
<span class="t" style="left:213.30px;top:31.08px;font-size:11.3px;transform:scaleX(1.0347);color:#1a1a1a;-webkit-text-stroke:0.25px;">Configure</span>
<span class="t" style="left:292.03px;top:31.08px;font-size:11.3px;transform:scaleX(0.9735);color:#1a1a1a;-webkit-text-stroke:0.25px;">Extract</span>
<span class="t" style="left:353.85px;top:31.08px;font-size:11.3px;transform:scaleX(1.0541);color:#1a1a1a;-webkit-text-stroke:0.25px;">Migrate</span>
<span class="t" style="left:426.20px;top:31.08px;font-size:11.3px;transform:scaleX(0.9654);color:#1a1a1a;-webkit-text-stroke:0.25px;">Command</span>
<span class="t" style="left:515.02px;top:31.08px;font-size:11.3px;transform:scaleX(0.9763);color:#1a1a1a;-webkit-text-stroke:0.25px;">Refresh</span>
<span class="t" style="left:583.10px;top:31.08px;font-size:11.3px;transform:scaleX(0.8793);color:#1a1a1a;-webkit-text-stroke:0.25px;">Close</span>
<span class="t" style="left:53.70px;top:79.54px;font-size:12.0px;transform:scaleX(0.9044);color:#1a1a1a;">DB2 Servers</span>
<span class="t" style="left:53.70px;top:97.54px;font-size:12.0px;transform:scaleX(0.9626);color:#1a1a1a;">Interbase-Firebird Servers</span>
<span class="t" style="left:53.70px;top:115.54px;font-size:12.0px;transform:scaleX(0.8895);color:#1a1a1a;">JDBC Servers</span>
<span class="t" style="left:53.70px;top:133.54px;font-size:12.0px;transform:scaleX(0.9169);color:#1a1a1a;">MS SQL Servers</span>
<span class="t" style="left:53.70px;top:151.54px;font-size:12.0px;transform:scaleX(0.9369);color:#1a1a1a;">MySQL Servers</span>
<span class="t" style="left:53.70px;top:169.54px;font-size:12.0px;transform:scaleX(0.9362);color:#1a1a1a;">Oracle Servers</span>
<span class="t" style="left:72.70px;top:187.54px;font-size:12.0px;transform:scaleX(0.9069);color:#1a1a1a;">ESLABARTORCL12c (Oracle 11.2.0.1.0)</span>
<span class="t" style="left:91.80px;top:205.54px;font-size:12.0px;transform:scaleX(0.9636);color:#1a1a1a;">Filters</span>
<span class="t" style="left:91.80px;top:223.54px;font-size:12.0px;transform:scaleX(1.0000);color:#1a1a1a;">Instance</span>
<span class="t" style="left:91.80px;top:241.54px;font-size:12.0px;transform:scaleX(0.9667);color:#1a1a1a;">Resource Manager</span>
<span class="t" style="left:91.80px;top:259.54px;font-size:12.0px;transform:scaleX(0.9667);color:#1a1a1a;">Storage</span>
<span class="t" style="left:91.80px;top:277.54px;font-size:12.0px;transform:scaleX(0.9930);color:#1a1a1a;">Security</span>
<span class="t" style="left:91.80px;top:295.54px;font-size:12.0px;transform:scaleX(0.9705);color:#1a1a1a;">Schema</span>
<span class="t" style="left:91.80px;top:313.54px;font-size:12.0px;transform:scaleX(1.0000);color:#1a1a1a;">Performance</span>
<span class="t" style="left:91.80px;top:331.54px;font-size:12.0px;transform:scaleX(0.9775);color:#1a1a1a;">Analyst</span>
<span class="t" style="left:72.70px;top:385.54px;font-size:12.0px;transform:scaleX(0.8902);color:#1a1a1a;">ETESSILK01 (Oracle 10.2.0.1.0)</span>
<span class="t" style="left:53.70px;top:403.54px;font-size:12.0px;transform:scaleX(0.9235);color:#1a1a1a;">SQL Azure Servers</span>
<span class="t" style="left:53.70px;top:421.54px;font-size:12.0px;transform:scaleX(0.8988);color:#1a1a1a;">Sybase Servers</span>
<span class="t" style="left:53.70px;top:439.54px;font-size:12.0px;transform:scaleX(0.9363);color:#1a1a1a;">Teradata Servers</span>
<span class="t" style="left:283.86px;top:58.00px;font-size:10.4px;transform:scaleX(1.0407);color:#1a1a1a;">Name</span>
<span class="t" style="left:666.00px;top:58.00px;font-size:10.4px;transform:scaleX(1.0308);color:#1a1a1a;">Value</span>
<span class="t" style="left:579.48px;top:345.81px;font-size:14.4px;transform:scaleX(1.1220);color:#3a3a3a;-webkit-text-stroke:0;">SGA Configuration</span>
<span class="t" style="left:873.20px;top:424.86px;font-size:10.8px;transform:scaleX(0.9987);color:#2a2a2a;-webkit-text-stroke:0;">DB Buffers (MB)</span>
<span class="t" style="left:981.48px;top:424.86px;font-size:10.8px;transform:scaleX(0.9900);color:#2a2a2a;-webkit-text-stroke:0;">272</span>
<span class="t" style="left:873.24px;top:443.46px;font-size:10.8px;transform:scaleX(0.9612);color:#2a2a2a;-webkit-text-stroke:0;">DB Caches (MB)</span>
<span class="t" style="left:993.36px;top:443.46px;font-size:10.8px;transform:scaleX(0.9900);color:#2a2a2a;-webkit-text-stroke:0;">0</span>
<span class="t" style="left:873.25px;top:462.06px;font-size:10.8px;transform:scaleX(0.9500);color:#2a2a2a;-webkit-text-stroke:0;">Fixed Size (MB)</span>
<span class="t" style="left:978.51px;top:462.06px;font-size:10.8px;transform:scaleX(0.9900);color:#2a2a2a;-webkit-text-stroke:0;">2.07</span>
<span class="t" style="left:873.20px;top:480.66px;font-size:10.8px;transform:scaleX(1.0027);color:#2a2a2a;-webkit-text-stroke:0;">Log Buffer (MB)</span>
<span class="t" style="left:978.51px;top:480.66px;font-size:10.8px;transform:scaleX(0.9900);color:#2a2a2a;-webkit-text-stroke:0;">8.41</span>
<span class="t" style="left:874.20px;top:499.26px;font-size:10.8px;transform:scaleX(0.9744);color:#2a2a2a;-webkit-text-stroke:0;">Shared Pool (MB)</span>
<span class="t" style="left:981.48px;top:499.26px;font-size:10.8px;transform:scaleX(0.9900);color:#2a2a2a;-webkit-text-stroke:0;">480</span>
<span class="t" style="left:873.21px;top:517.86px;font-size:10.8px;transform:scaleX(0.9896);color:#2a2a2a;-webkit-text-stroke:0;">Large Pool (MB)</span>
<span class="t" style="left:987.42px;top:517.86px;font-size:10.8px;transform:scaleX(0.9900);color:#2a2a2a;-webkit-text-stroke:0;">16</span>
<span class="t" style="left:874.20px;top:536.46px;font-size:10.8px;transform:scaleX(0.9608);color:#2a2a2a;-webkit-text-stroke:0;">Java Pool (MB)</span>
<span class="t" style="left:987.42px;top:536.46px;font-size:10.8px;transform:scaleX(0.9900);color:#2a2a2a;-webkit-text-stroke:0;">16</span>
</body></html>
